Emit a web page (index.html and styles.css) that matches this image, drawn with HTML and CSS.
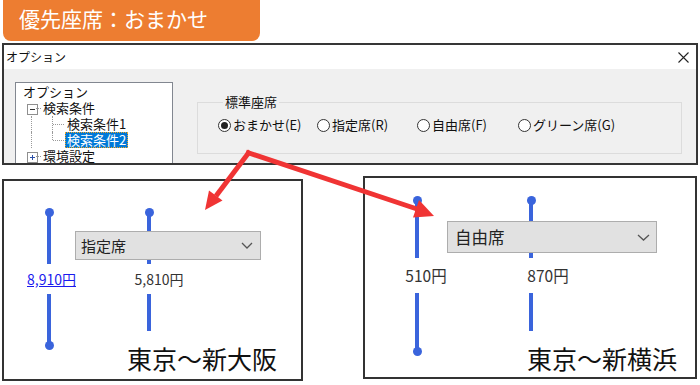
FILE: index.html
```html
<!DOCTYPE html>
<html lang="ja">
<head>
<meta charset="utf-8">
<link rel="stylesheet" href="styles.css">
</head>
<body>
<div class="page">
  <div class="banner">優先座席：おまかせ</div>

  <div class="dialog">
    <div class="titlebar">
      <span class="title">オプション</span>
      <svg class="close" width="11" height="11" viewBox="0 0 11 11"><path d="M0.5 0.5L10.5 10.5M10.5 0.5L0.5 10.5" stroke="#222" stroke-width="1.1" fill="none"/></svg>
    </div>
    <div class="dbody">
      <div class="tree">
        <div class="row root"><span class="lbl">オプション</span></div>
        <div class="row"><span class="cell c1 exp minus"></span><span class="lbl">検索条件</span></div>
        <div class="row"><span class="cell c1 vline"></span><span class="cell c2 vline hline"></span><span class="lbl">検索条件1</span></div>
        <div class="row"><span class="cell c1 vline"></span><span class="cell c2 vhalf hline"></span><span class="lbl sel">検索条件2</span></div>
        <div class="row"><span class="cell c1 exp plus"></span><span class="lbl">環境設定</span></div>
      </div>
      <fieldset class="group">
        <legend>標準座席</legend>
        <div class="radios">
          <div class="opt"><span class="radio on"></span><span>おまかせ(E)</span></div>
          <div class="opt"><span class="radio"></span><span>指定席(R)</span></div>
          <div class="opt"><span class="radio"></span><span>自由席(F)</span></div>
          <div class="opt"><span class="radio"></span><span>グリーン席(G)</span></div>
        </div>
      </fieldset>
    </div>
  </div>

  <div class="panels">
    <div class="panel p1">
      <div class="track t1">
        <span class="dot"></span><span class="seg top"></span>
        <a class="price link">8,910円</a>
        <span class="seg bot"></span><span class="dot"></span>
      </div>
      <div class="track t2">
        <span class="dot"></span><span class="seg top"></span>
        <span class="price">5,810円</span>
        <span class="seg short"></span>
      </div>
      <div class="route">東京～新大阪</div>
      <div class="select">
        <span>指定席</span>
        <svg width="12" height="7" viewBox="0 0 12 7"><polyline points="1,1 6,6 11,1" fill="none" stroke="#555" stroke-width="1.3"/></svg>
      </div>
    </div>

    <div class="panel p2">
      <div class="track t1">
        <span class="dot"></span><span class="seg top"></span>
        <span class="price">510円</span>
        <span class="seg bot"></span><span class="dot"></span>
      </div>
      <div class="track t2">
        <span class="dot"></span><span class="seg top"></span>
        <span class="price">870円</span>
        <span class="seg short"></span>
      </div>
      <div class="route">東京～新横浜</div>
      <div class="select">
        <span>自由席</span>
        <svg width="13" height="7" viewBox="0 0 13 7"><polyline points="1,1 6.5,6 12,1" fill="none" stroke="#555" stroke-width="1.3"/></svg>
      </div>
    </div>
  </div>

  <svg class="arrows" width="700" height="385" viewBox="0 0 700 385">
    <g stroke="#f03434" stroke-width="5" fill="none" stroke-linecap="butt">
      <line x1="250" y1="151" x2="216" y2="196"/>
      <line x1="246" y1="152" x2="417" y2="209"/>
    </g>
    <g fill="#f03434">
      <polygon points="205,210 222.5,200.5 209,190.5"/>
      <polygon points="434,216 413,217.5 419,200"/>
    </g>
  </svg>
</div>
</body>
</html>
```

FILE: styles.css
```css
* { box-sizing: border-box; }
body {
  margin: 0;
  background: #ffffff;
  font-family: "Noto Sans CJK JP", "Noto Sans", sans-serif;
  color: #1a1a1a;
}
.page {
  position: relative;
  width: 700px;
  height: 385px;
  overflow: hidden;
  background: #ffffff;
}

/* banner */
.banner {
  margin-left: 3px;
  width: 257px;
  height: 41px;
  background: #ed7d31;
  border-radius: 0 0 8px 8px;
  color: #ffffff;
  font-size: 21px;
  line-height: 36px;
  padding-left: 16px;
  white-space: nowrap;
}

/* dialog */
.dialog {
  margin: 2px 0 0 2px;
  width: 696px;
  height: 122px;
  border: 2px solid #363636;
  background: #f0f0f0;
  overflow: hidden;
}
.titlebar {
  height: 24px;
  background: #ffffff;
  display: flex;
  align-items: center;
  justify-content: space-between;
  padding: 0 7px 0 2px;
}
.title { font-size: 12px; line-height: 24px; color: #111; }
.close { display: block; }

.dbody {
  display: flex;
  align-items: flex-start;
  padding: 13px 0 0 11px;
}

/* tree */
.tree {
  width: 158px;
  height: 110px;
  flex: none;
  background: #ffffff;
  border: 1px solid #828790;
  padding: 1px 0 0 5px;
  font-size: 13px;
}
.row {
  display: flex;
  align-items: center;
  height: 16px;
}
.lbl {
  padding: 0 2px;
  line-height: 16px;
  white-space: nowrap;
  color: #111;
}
.lbl.sel {
  background: #0078d7;
  color: #ffffff;
  outline: 1px dotted #f5a623;
  outline-offset: -1px;
}
.cell { position: relative; height: 16px; flex: none; }
.c1 { width: 20px; }
.c2 { width: 24px; }
.vline::before {
  content: "";
  position: absolute;
  left: 10px; top: 0; bottom: 0;
  border-left: 1px dotted #9a9a9a;
}
.c2.vline::before { left: 11px; }
.vhalf::before {
  content: "";
  position: absolute;
  left: 11px; top: 0; height: 8px;
  border-left: 1px dotted #9a9a9a;
}
.hline::after {
  content: "";
  position: absolute;
  left: 12px; right: 1px; top: 8px;
  border-top: 1px dotted #9a9a9a;
}
.exp::before {
  content: "";
  position: absolute;
  left: 6px; top: 4px;
  width: 9px; height: 9px;
  border: 1px solid #8f8f8f;
  background-color: #ffffff;
  background-repeat: no-repeat;
  background-position: center;
}
.minus::before {
  background-image: linear-gradient(#333, #333);
  background-size: 5px 1px;
}
.plus::before {
  background-image: linear-gradient(#2a4fa8, #2a4fa8), linear-gradient(#2a4fa8, #2a4fa8);
  background-size: 5px 1px, 1px 5px;
}
.exp::after {
  content: "";
  position: absolute;
  left: 15px; right: 0; top: 8px;
  border-top: 1px dotted #9a9a9a;
}

/* group box */
.group {
  margin: 12px 0 0 24px;
  width: 485px;
  border: 1px solid #dcdcdc;
  padding: 7px 0 20px 20px;
  min-width: 0;
}
.group legend {
  margin-left: 5px;
  padding: 0 2px;
  font-size: 13px;
  line-height: 16px;
  color: #111;
}
.radios {
  display: grid;
  grid-template-columns: 99px 100px 101px auto;
  font-size: 13px;
  line-height: 16px;
}
.opt {
  display: flex;
  align-items: center;
  gap: 2px;
  white-space: nowrap;
  color: #111;
}
.radio {
  width: 13px;
  height: 13px;
  border: 1px solid #333;
  border-radius: 50%;
  background: #ffffff;
  flex: none;
  display: flex;
  align-items: center;
  justify-content: center;
}
.radio.on::after {
  content: "";
  width: 7px;
  height: 7px;
  border-radius: 50%;
  background: #222;
}

/* panels */
.panels {
  display: flex;
  align-items: flex-start;
  gap: 60px;
  margin: 11px 0 0 2px;
}
.panel {
  position: relative;
  display: grid;
  grid-template-columns: 60px 1fr;
  grid-template-rows: auto 1fr;
  border: 2px solid #333333;
  background: #ffffff;
}
.p1 {
  width: 301px;
  height: 202px;
  margin-top: 3px;
  padding: 28px 0 0 15px;
  column-gap: 40px;
}
.p2 {
  width: 334px;
  height: 203px;
  padding: 19px 0 0 22px;
  column-gap: 54px;
}
.track {
  width: 60px;
  display: flex;
  flex-direction: column;
  align-items: center;
  align-self: start;
}
.t1 { grid-column: 1; grid-row: 1 / 3; }
.t2 { grid-column: 2; grid-row: 1; }
.dot {
  width: 9px;
  height: 9px;
  border-radius: 50%;
  background: #3a64dc;
  margin: -1px 0;
  position: relative;
}
.seg {
  width: 4px;
  background: #3a64dc;
}
.price {
  white-space: nowrap;
  color: #333;
  text-align: center;
}
.price.link {
  color: #1a1aee;
  text-decoration: underline;
}
.p1 .seg.top { height: 48px; }
.p1 .seg.bot { height: 48px; }
.p1 .seg.short { height: 37px; }
.p1 .price { font-size: 14px; line-height: 30px; }
.p1 .t1 .price { margin-left: 5px; }
.p1 .t2 .price { margin-left: 20px; }
.p2 .seg.top { height: 54px; }
.p2 .seg.bot { height: 55px; }
.p2 .seg.short { height: 38px; }
.p2 .price { font-size: 15.5px; line-height: 35px; }
.p2 .t1 .price { margin-left: 18px; }
.p2 .t2 .price { margin-left: 34px; }

.route {
  grid-column: 2;
  grid-row: 2;
  justify-self: end;
  align-self: end;
  font-size: 25px;
  line-height: 30px;
  white-space: nowrap;
  color: #111;
}
.p1 .route { margin: 0 24px 6px 0; }
.p2 .route { margin: 0 18px 4px 0; }

.select {
  position: absolute;
  display: flex;
  align-items: center;
  justify-content: space-between;
  background: #e1e1e1;
  border: 1px solid #adadad;
  color: #222;
}
.p1 .select {
  left: 71px; top: 50px;
  width: 186px; height: 29px;
  padding: 0 7px 0 5px;
  font-size: 15px;
}
.p2 .select {
  left: 82px; top: 43px;
  width: 210px; height: 32px;
  padding: 0 6px 0 7px;
  font-size: 16.5px;
}
.select svg { display: block; }

.arrows {
  position: absolute;
  left: 0;
  top: 0;
  pointer-events: none;
}
```
